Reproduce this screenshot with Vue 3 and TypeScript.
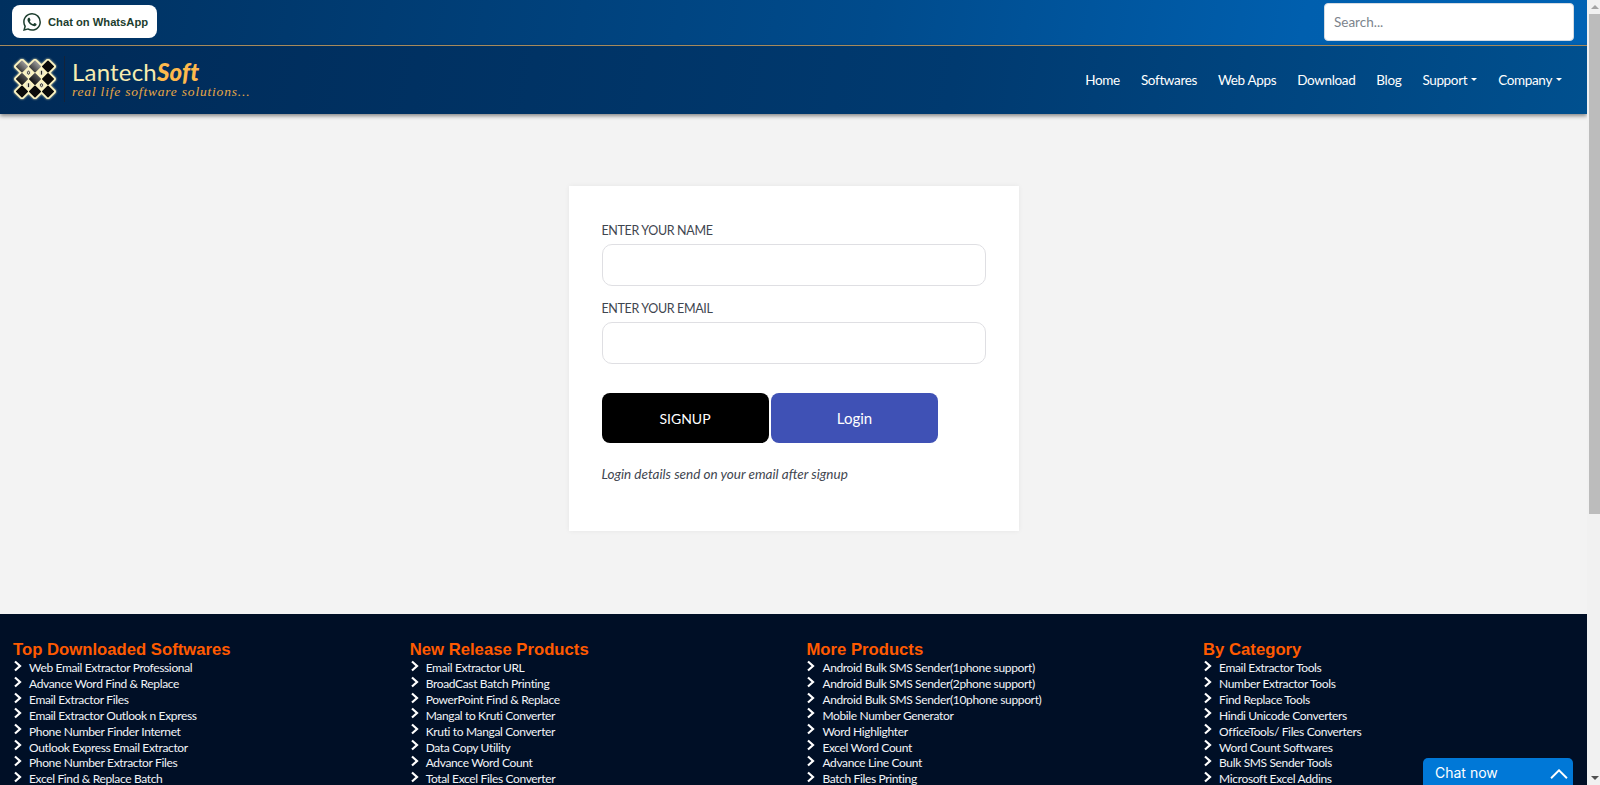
<script setup lang="ts">
interface Column { title: string; items: string[] }
const navItems: { label: string; caret?: boolean }[] = [
  { label: 'Home' }, { label: 'Softwares' }, { label: 'Web Apps' }, { label: 'Download' },
  { label: 'Blog' }, { label: 'Support', caret: true }, { label: 'Company', caret: true },
]
const columns: Column[] = [
  { title: 'Top Downloaded Softwares', items: ['Web Email Extractor Professional', 'Advance Word Find & Replace', 'Email Extractor Files', 'Email Extractor Outlook n Express', 'Phone Number Finder Internet', 'Outlook Express Email Extractor', 'Phone Number Extractor Files', 'Excel Find & Replace Batch'] },
  { title: 'New Release Products', items: ['Email Extractor URL', 'BroadCast Batch Printing', 'PowerPoint Find & Replace', 'Mangal to Kruti Converter', 'Kruti to Mangal Converter', 'Data Copy Utility', 'Advance Word Count', 'Total Excel Files Converter'] },
  { title: 'More Products', items: ['Android Bulk SMS Sender(1phone support)', 'Android Bulk SMS Sender(2phone support)', 'Android Bulk SMS Sender(10phone support)', 'Mobile Number Generator', 'Word Highlighter', 'Excel Word Count', 'Advance Line Count', 'Batch Files Printing'] },
  { title: 'By Category', items: ['Email Extractor Tools', 'Number Extractor Tools', 'Find Replace Tools', 'Hindi Unicode Converters', 'OfficeTools/ Files Converters', 'Word Count Softwares', 'Bulk SMS Sender Tools', 'Microsoft Excel Addins'] },
]
const diamonds: { x: number; y: number; fill: string }[] = [
  { x: 9, y: 7.5, fill: 'url(#dia-g)' }, { x: 22, y: 7.5, fill: 'url(#dia-g)' }, { x: 35, y: 7.5, fill: '#0a0a0a' },
  { x: 9, y: 20, fill: 'url(#dia-m)' }, { x: 22, y: 20, fill: 'url(#dia-m)' }, { x: 35, y: 20, fill: '#0a0a0a' },
  { x: 9, y: 32.5, fill: '#0a0a0a' }, { x: 22, y: 32.5, fill: '#0a0a0a' }, { x: 35, y: 32.5, fill: '#0a0a0a' },
]
const bits: { x: number; y: number; bit: string }[] = [
  { x: 15.5, y: 13.7, bit: '0' }, { x: 28.5, y: 13.7, bit: '1' },
  { x: 15.5, y: 26.2, bit: '1' }, { x: 28.5, y: 26.2, bit: '0' },
]
</script>

<template>
  <div class="shell">
    <div class="page">
      <div class="topbar">
        <a class="wa">
          <svg class="wa-icon" viewBox="0 0 24 24"><path fill="#1c3d2e" d="M17.472 14.382c-.297-.149-1.758-.867-2.03-.967-.273-.099-.471-.148-.67.15-.197.297-.767.966-.94 1.164-.173.199-.347.223-.644.075-.297-.15-1.255-.463-2.39-1.475-.883-.788-1.48-1.761-1.653-2.059-.173-.297-.018-.458.13-.606.134-.133.298-.347.446-.52.149-.174.198-.298.298-.497.099-.198.05-.371-.025-.52-.075-.149-.669-1.612-.916-2.207-.242-.579-.487-.5-.669-.51-.173-.008-.371-.01-.57-.01-.198 0-.52.074-.792.372-.272.297-1.04 1.016-1.04 2.479 0 1.462 1.065 2.875 1.213 3.074.149.198 2.096 3.2 5.077 4.487.709.306 1.262.489 1.694.625.712.227 1.36.195 1.871.118.571-.085 1.758-.719 2.006-1.413.248-.694.248-1.289.173-1.413-.074-.124-.272-.198-.57-.347m-5.421 7.403h-.004a9.87 9.87 0 01-5.031-1.378l-.361-.214-3.741.982.998-3.648-.235-.374a9.86 9.86 0 01-1.51-5.26c.001-5.45 4.436-9.884 9.888-9.884 2.64 0 5.122 1.03 6.988 2.898a9.825 9.825 0 012.893 6.994c-.003 5.45-4.437 9.884-9.885 9.884m8.413-18.297A11.815 11.815 0 0012.05 0C5.495 0 .16 5.335.157 11.892c0 2.096.547 4.142 1.588 5.945L.057 24l6.305-1.654a11.882 11.882 0 005.683 1.448h.005c6.554 0 11.89-5.335 11.893-11.893a11.821 11.821 0 00-3.48-8.413z"/></svg>
          <span>Chat on WhatsApp</span>
        </a>
        <input class="search" placeholder="Search..." />
      </div>
      <header class="nav">
        <div class="brand">
          <svg class="logo" viewBox="0 0 44 40">
            <defs>
              <linearGradient id="dia-g" x1="0" y1="0" x2="0" y2="1"><stop offset="0" stop-color="#9a9a9a"/><stop offset="1" stop-color="#3a3a3a"/></linearGradient>
              <linearGradient id="dia-m" x1="0" y1="0" x2="0" y2="1"><stop offset="0" stop-color="#555"/><stop offset="1" stop-color="#111"/></linearGradient>
            </defs>
            <rect x="8" y="7" width="28" height="26" fill="#fbf3c2" />
            <rect v-for="(d, i) in diamonds" :key="'b' + i" :x="d.x - 6.2" :y="d.y - 6.2" width="12.4" height="12.4" rx="2" :transform="`rotate(45 ${d.x} ${d.y})`" fill="#fbf3c2" />
            <rect v-for="(d, i) in diamonds" :key="'d' + i" :x="d.x - 4.5" :y="d.y - 4.5" width="9" height="9" rx=".8" :transform="`rotate(45 ${d.x} ${d.y})`" :fill="d.fill" />
            <g v-for="(b, i) in bits" :key="'c' + i">
              <circle :cx="b.x" :cy="b.y" r="2.6" fill="#e9e5cc" />
              <rect v-if="b.bit === '1'" :x="b.x - .6" :y="b.y - 1.9" width="1.2" height="3.8" fill="#222" />
              <ellipse v-else :cx="b.x" :cy="b.y" rx="1" ry="1.5" fill="none" stroke="#222" stroke-width=".9" />
            </g>
          </svg>
          <div class="divider"></div>
          <div class="brand-text">
            <div class="brand-name">Lantech<b>Soft</b></div>
            <div class="brand-tag">real life software solutions...</div>
          </div>
        </div>
        <nav class="menu">
          <a v-for="n in navItems" :key="n.label" class="menu-item">{{ n.label }}<i v-if="n.caret" class="caret"></i></a>
        </nav>
      </header>
      <main class="content">
        <form class="card" @submit.prevent>
          <label class="label">ENTER YOUR NAME</label>
          <input class="field" />
          <label class="label second">ENTER YOUR EMAIL</label>
          <input class="field" />
          <div class="actions">
            <button class="btn signup">SIGNUP</button>
            <button class="btn login">Login</button>
          </div>
          <p class="note">Login details send on your email after signup</p>
        </form>
      </main>
      <footer class="footer">
        <section v-for="c in columns" :key="c.title" class="col">
          <h3>{{ c.title }}</h3>
          <ul>
            <li v-for="it in c.items" :key="it">
              <svg class="chev" viewBox="0 0 10 12"><path d="M2 1.5 7 6 2 10.5" fill="none" stroke="#fff" stroke-width="2.2"/></svg>
              <span>{{ it }}</span>
            </li>
          </ul>
        </section>
        <div class="chat">
          <span>Chat now</span>
          <svg class="chat-up" viewBox="0 0 17 9"><path d="M1 8.5 8.5 1 16 8.5" fill="none" stroke="#fff" stroke-width="1.8"/></svg>
        </div>
      </footer>
    </div>
    <div class="scrollbar">
      <div class="sb-arrow up"></div>
      <div class="sb-thumb"></div>
      <div class="sb-track"></div>
      <div class="sb-arrow down"></div>
    </div>
  </div>
</template>

<style>
html, body { margin: 0; height: 100%; overflow: hidden; }
</style>

<style scoped>
* { box-sizing: border-box; }
.shell { display: flex; width: 1600px; height: 785px; overflow: hidden; font-family: Lato, "Liberation Sans", sans-serif; background: #f3f3f3; }
.page { flex: 1; min-width: 0; height: 785px; display: flex; flex-direction: column; overflow: hidden; }
.topbar { height: 45px; flex: none; display: flex; align-items: flex-start; justify-content: space-between; padding: 3px 13px 0 12px; background: linear-gradient(100deg, #00305f 0%, #004b8c 55%, #005fae 82%, #0062b4 100%); }
.wa { margin-top: 2px; width: 145px; height: 33px; background: #fff; border-radius: 8px; display: flex; align-items: center; gap: 7px; padding-left: 11px; font: 700 11.2px "Liberation Sans", sans-serif; color: #1c3d2e; }
.wa-icon { width: 18px; height: 18px; flex: none; }
.search { width: 250px; height: 38px; border: 1px solid #d5dbe2; border-radius: 4px; padding: 0 9px; font: 13.5px Lato, sans-serif; background: #fff; outline: none; }
.search::placeholder { color: #7c848c; }
.nav { height: 69px; flex: none; border-top: 1px solid #a68a5c; display: flex; align-items: center; justify-content: space-between; padding: 0 25px 0 13px; background: linear-gradient(100deg, #002a57 0%, #003a70 60%, #00508f 100%); box-shadow: 0 2px 4px rgba(0,0,0,.45); position: relative; z-index: 1; }
.brand { display: flex; align-items: center; margin-top: -2px; }
.logo { width: 44px; height: 40px; filter: drop-shadow(0 0 1px #f6eeb8); }
.divider { width: 1px; height: 46px; background: #14233a; margin: 0 7px 0 7px; }
.brand-text { display: flex; flex-direction: column; }
.brand-name { font: 400 24px/25px Lato, sans-serif; color: #f6ecb0; letter-spacing: .2px; }
.brand-name b { font-weight: 900; font-style: italic; color: #fdb94d; }
.brand-tag { font: italic 13.5px/16px "Liberation Serif", serif; color: #e8a846; letter-spacing: .8px; }
.menu { display: flex; gap: 21px; margin-top: -1px; }
.menu-item { color: #fff; font-size: 13.5px; letter-spacing: -.35px; display: flex; align-items: center; }
.caret { width: 0; height: 0; margin-left: 4px; border-left: 3px solid transparent; border-right: 3px solid transparent; border-top: 3px solid #fff; }
.content { flex: 1; display: flex; justify-content: center; padding-top: 72px; }
.card { width: 450px; height: 345px; background: #fff; box-shadow: 0 0 5px rgba(0,0,0,.06); padding: 36px 33px 0 33px; display: flex; flex-direction: column; align-items: flex-start; }
.label { font-size: 12.5px; letter-spacing: -.35px; line-height: 18px; color: #3f4650; margin-bottom: 4px; }
.label.second { margin-top: 14px; margin-bottom: 4px; }
.field { width: 384px; height: 42px; border: 1px solid #dfdfe3; border-radius: 10px; background: #fff; outline: none; flex: none; }
.actions { display: flex; gap: 2.5px; margin-top: 29px; }
.btn { width: 167px; height: 50px; border: 0; border-radius: 8px; color: #fff; font: 15px Lato, sans-serif; }
.signup { background: #000; font-size: 14px; }
.login { background: #3f51b5; }
.note { margin: 23px 0 0; font-style: italic; font-size: 13.5px; color: #3f4650; }
.footer { height: 171px; flex: none; background: #000f26; display: grid; grid-template-columns: repeat(4, 396.7px); padding: 26px 0 0 13px; position: relative; overflow: hidden; }
.col h3 { margin: 0; font: 700 16.7px/20px "Liberation Sans", sans-serif; color: #ff5a00; }
.col ul { list-style: none; margin: 0; padding: 0; }
.col li { display: flex; align-items: center; height: 15.85px; color: #f2f4f8; font-size: 12px; letter-spacing: -.35px; white-space: nowrap; }
.chev { width: 10px; height: 12px; margin-right: 6px; flex: none; position: relative; top: -2px; }
.chat { position: absolute; left: 1423px; top: 144px; width: 150px; height: 40px; padding: 6px 5px 0 12px; background: #0078d7; border-radius: 5px 5px 0 0; color: #fff; display: flex; align-items: flex-start; justify-content: space-between; font: 14px Inter, sans-serif; }
.chat-up { width: 18px; height: 10px; margin-top: 5px; }
.scrollbar { width: 13px; flex: none; background: #f1f1f1; display: flex; flex-direction: column; }
.sb-arrow { height: 14px; flex: none; display: flex; align-items: center; justify-content: center; padding-left: 2px; }
.sb-arrow.up::after { content: ""; border-left: 4px solid transparent; border-right: 4px solid transparent; border-bottom: 4px solid #a3a3a3; }
.sb-arrow.down::after { content: ""; border-left: 4px solid transparent; border-right: 4px solid transparent; border-top: 4px solid #505050; }
.sb-thumb { height: 500px; flex: none; background: #bcbcbc; margin-left: 2px; }
.sb-track { flex: 1; }
</style>
